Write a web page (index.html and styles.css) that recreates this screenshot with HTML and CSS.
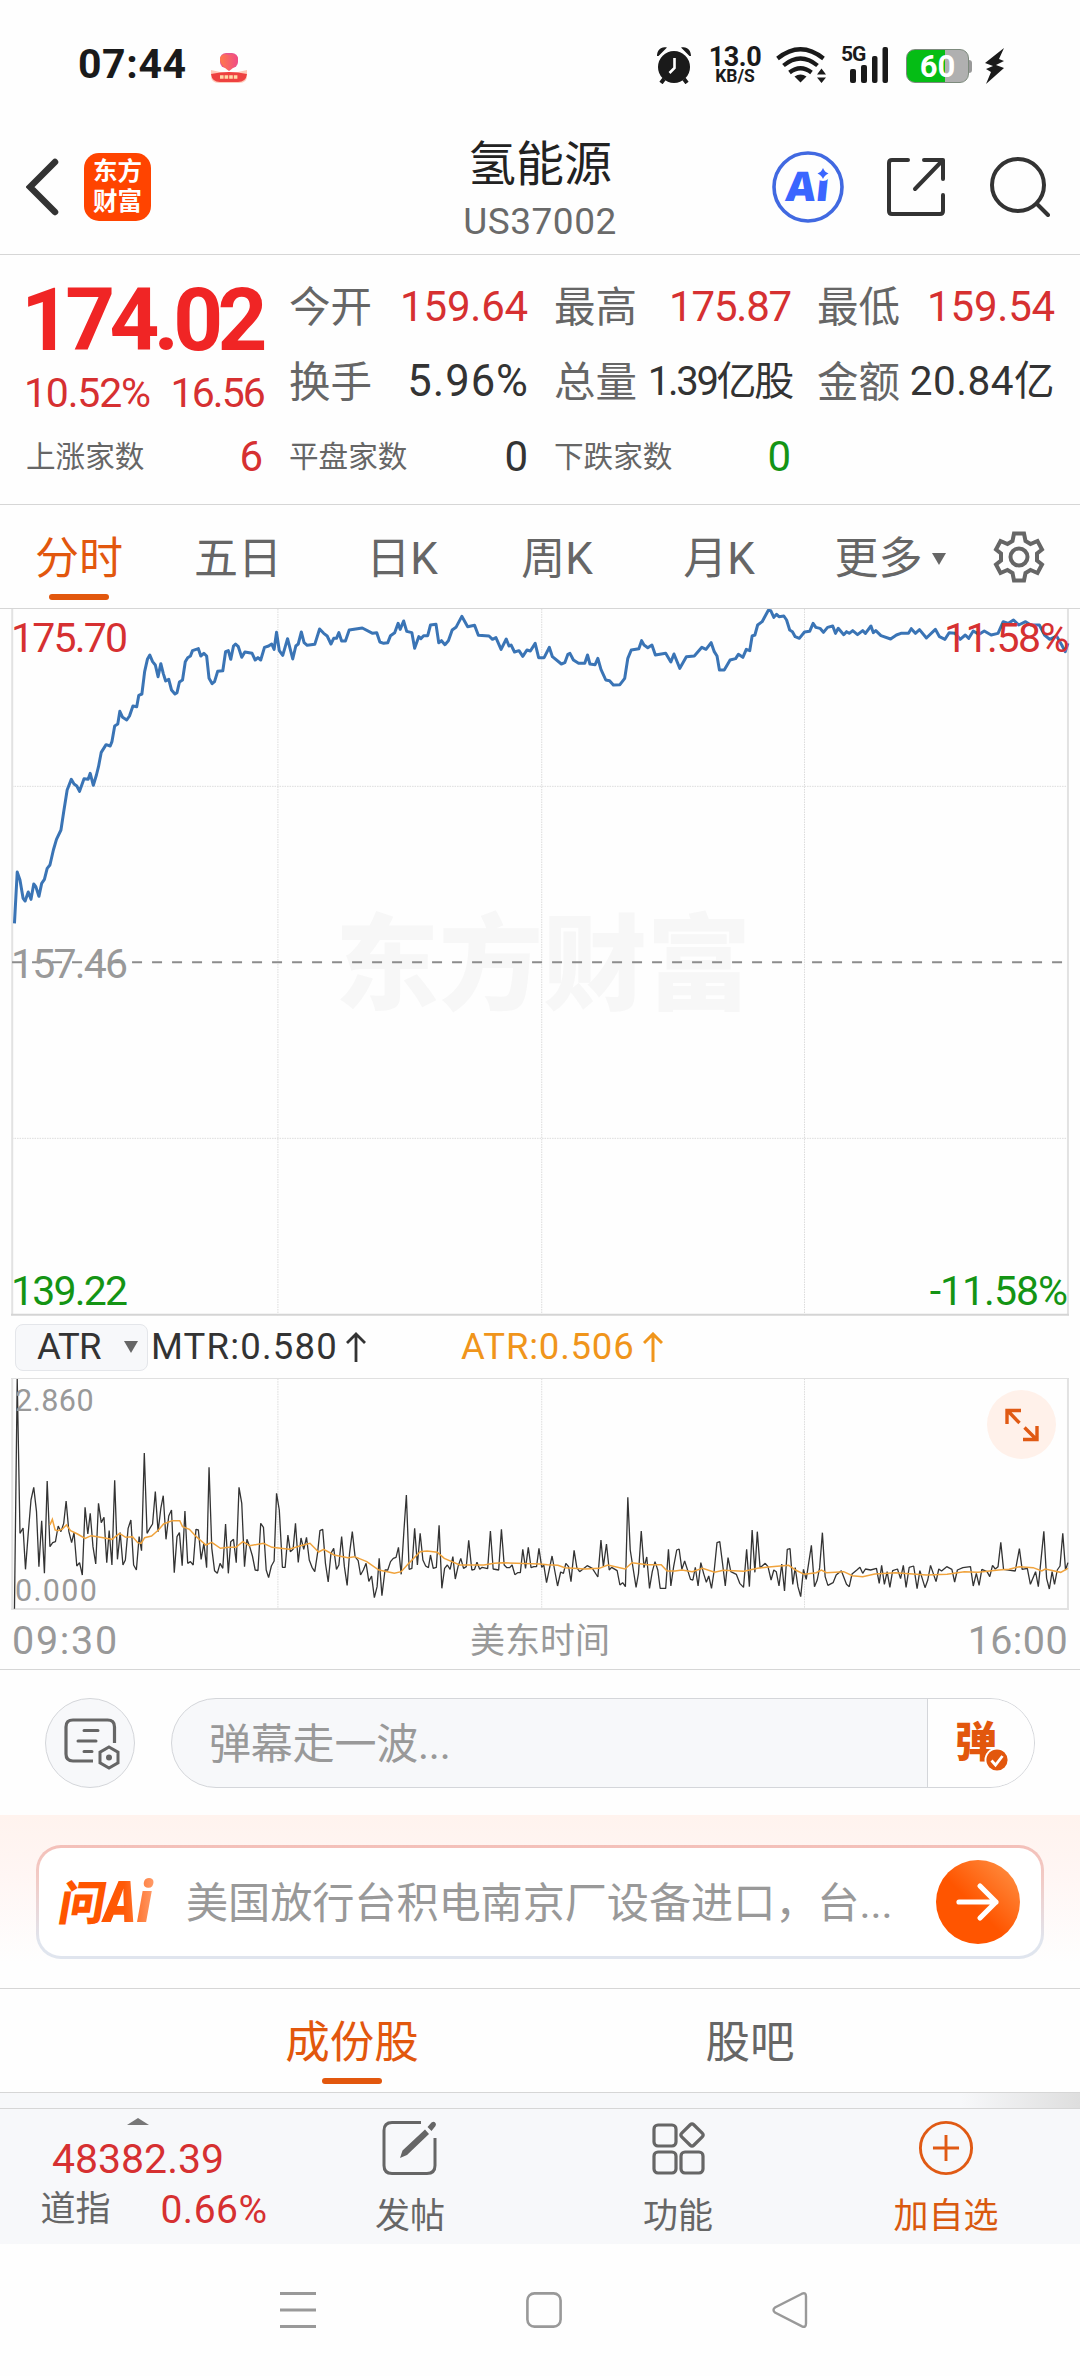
FILE: index.html
```html
<!DOCTYPE html>
<html lang="zh-CN">
<head>
<meta charset="utf-8">
<title>氢能源 US37002</title>
<link rel="stylesheet" href="styles.css">
</head>
<body>
<div class="screen">

<div class="status">
  <span class="clock">07:44</span>
  <svg class="st-app" width="36" height="32" viewBox="0 0 36 32">
    <defs><linearGradient id="peach" x1="0" x2="1"><stop offset="0" stop-color="#ff7a4a"/><stop offset="1" stop-color="#f04a86"/></linearGradient></defs>
    <rect x="9" y="1" width="18" height="15" rx="6" fill="#e8558f"/>
    <path d="M18 19C12 15 9 11 9 7c0-4 5-6 9-4 4-2 9 0 9 4 0 4-3 8-9 12z" fill="url(#peach)"/>
    <path d="M0 18q18 5 36 0v6q0 7-8 7H8q-8 0-8-7z" fill="#ffc9b8"/>
    <path d="M0 22q18-4 36 0-1 8-9 8H9q-8 0-9-8z" fill="#ee4140"/>
    <path d="M9 25h18" stroke="#ffd9a8" stroke-width="3.4" stroke-dasharray="3.6 1"/>
  </svg>
  <svg class="st-alarm" width="36" height="38" viewBox="0 0 36 38" fill="#1a1a1a">
    <circle cx="18" cy="21" r="16"/>
    <path d="M1 10C1 4 5 0 11 1.500L2.500 10zM35 10C35 4 31 0 25 1.500L33.500 10z"/>
    <path d="M8 33l-3 4M28 33l3 4" stroke="#1a1a1a" stroke-width="4"/>
    <path d="M18.500 12v10l-5 5" fill="none" stroke="#fff" stroke-width="2.600"/>
  </svg>
  <span class="rate"><b class="rate-n">13.0</b><b class="rate-u">KB/S</b></span>
  <svg class="st-wifi" width="51" height="36" viewBox="0 0 51 36" fill="none" stroke="#1a1a1a" stroke-width="4.200">
    <path d="M1.500 11.500Q24.500-7 47.500 11.500M7.500 18.500Q24.500 4.500 41.500 18.500M13.500 25.500q11-8.500 22 0"/>
    <path d="M18.500 29.500q6-4 12 0l-6 6z" fill="#1a1a1a" stroke="none"/>
    <path d="M45.500 21.500l4.500 6h-9zM45.500 36l4.500-5.500h-9z" fill="#1a1a1a" stroke="none"/>
  </svg>
  <span class="sig"><b class="sig-g">5G</b>
    <svg width="39" height="36" viewBox="0 0 39 36" fill="#1a1a1a"><rect y="22" width="6" height="14" rx="2"/><rect x="11" y="18" width="6" height="18" rx="2"/><rect x="22" y="9" width="5.500" height="27" rx="2"/><rect x="32.500" width="5.500" height="36" rx="2"/></svg>
  </span>
  <span class="batt"><b>60</b></span>
  <svg class="st-bolt" width="21" height="36" viewBox="0 0 21 36" fill="#1a1a1a"><path d="M20 0L1 15l8 3-7 3 5 3-5 12L20 20l-8-3 8-4-5-2z"/></svg>
</div>

<header class="head">
  <div class="head-l">
    <svg width="34" height="58" viewBox="0 0 34 58" fill="none" stroke="#333" stroke-width="6.500" stroke-linecap="round"><path d="M29 4L4 29l25 25"/></svg>
    <div class="brand"><span>东方</span><span>财富</span></div>
  </div>
  <div class="head-c"><h1>氢能源</h1><p>US37002</p></div>
  <div class="head-r">
    <svg class="ai-ico" width="72" height="72" viewBox="0 0 72 72">
      <circle cx="36" cy="36" r="34" fill="none" stroke="#4169e1" stroke-width="3.600"/>
      <text x="18 48" y="50.500" class="ai-t" transform="skewX(-6)">Ai</text>
      <circle cx="51" cy="22.500" r="7.500" fill="#fefefe"/>
      <path d="M51 17q1.500 4 5.500 5.500-4 1.500-5.500 5.500-1.500-4-5.500-5.500 4-1.500 5.500-5.500z" fill="#3a66ff"/>
    </svg>
    <svg class="share-ico" width="58" height="58" viewBox="0 0 58 58" fill="none" stroke="#333" stroke-width="4" stroke-linecap="round" stroke-linejoin="round"><path d="M21 2H5Q2 2 2 5v48q0 3 3 3h48q3 0 3-3V37M37 2h19v19M55 3L28 31"/></svg>
    <svg class="find-ico" width="60" height="60" viewBox="0 0 60 60" fill="none" stroke="#333" stroke-width="4" stroke-linecap="round"><circle cx="28" cy="28" r="26"/><path d="M47 47l11 11"/></svg>
  </div>
</header>

<section class="quote">
  <div class="big"><strong>174.02</strong><div class="chg"><span>10.52%</span><span class="amt">16.56</span></div></div>
  <div class="cell"><label>今开</label><span class="red n1">159.64</span></div>
  <div class="cell"><label>最高</label><span class="red n1 tight">175.87</span></div>
  <div class="cell"><label>最低</label><span class="red n1">159.54</span></div>
  <div class="cell"><label>换手</label><span class="n3">5.96%</span></div>
  <div class="cell"><label>总量</label><span class="n2">1.39亿股</span></div>
  <div class="cell"><label>金额</label><span class="n4">20.84亿</span></div>
  <div class="cell small"><label>上涨家数</label><span class="red">6</span></div>
  <div class="cell small"><label>平盘家数</label><span>0</span></div>
  <div class="cell small"><label>下跌家数</label><span class="green">0</span></div>
</section>

<nav class="period">
  <a class="on">分时</a><a>五日</a><a>日K</a><a>周K</a><a>月K</a><a class="more">更多<i></i></a>
  <a class="gear"><svg width="54" height="54" viewBox="0 0 54 54" fill="none" stroke="#666" stroke-width="4"><path d="M22 3.500h10l1.500 7.500 5 3 7-3 4.500 8.500-5 4v7l5 4-4.500 8.500-7-3-5 3-1.500 7.500H22l-1.500-7.500-5-3-7 3L4 34.500l5-4v-7l-5-4L8.500 11l7 3 5-3z"/><circle cx="27" cy="27" r="8.500"/></svg></a>
</nav>

<section class="chart price">
  <div class="mark">东方财富</div>
  <svg width="1080" height="707" viewBox="0 57 3136 2121" preserveAspectRatio="none">
    <g class="grid"><path d="M807 57V2176M1573 57V2176M2336 57V2176M35 589H3101M35 1645H3101"/></g>
    <path class="side" d="M35.500 57V2176M3101 57V2176"/><path class="base" d="M32 2174H3104"/>
    <path class="mid" d="M35 1117H3090"/>
    <polyline class="line" points="42,1000 50,846 58,870 67,925 73,933 82,906 90,928 98,882 104,890 113,919 121,880 129,868 137,835 145,825 155,780 164,748 177,720 185,665 195,600 207,568 215,582 223,588 231,604 244,566 256,568 262,550 271,586 280,555 286,530 294,487 308,464 320,468 325,455 333,408 342,402 348,364 356,382 368,390 376,378 386,348 397,350 403,316 412,312 420,245 428,208 435,195 443,215 451,225 459,260 467,221 474,250 481,273 490,268 498,300 508,312 514,308 521,276 530,270 538,215 545,203 553,198 559,182 576,176 583,198 592,190 600,198 607,265 616,281 623,275 632,244 647,242 655,185 663,182 670,208 678,168 684,162 692,170 702,202 711,186 732,190 741,210 749,203 757,210 768,172 780,168 789,162 796,178 803,127 811,182 821,196 835,146 850,207 859,168 866,162 875,126 883,158 892,166 914,163 928,117 940,130 950,138 961,162 969,145 977,145 984,128 992,153 1003,153 1014,120 1052,114 1082,130 1094,128 1103,156 1114,160 1126,158 1134,137 1146,128 1156,100 1162,118 1172,93 1181,124 1196,128 1204,175 1216,140 1222,146 1230,137 1242,137 1250,105 1266,103 1274,158 1282,152 1292,164 1302,152 1313,120 1324,112 1341,79 1358,110 1378,106 1389,136 1420,138 1430,148 1440,143 1455,178 1470,147 1478,168 1484,165 1494,186 1507,182 1518,199 1530,180 1540,183 1554,160 1564,203 1580,203 1595,172 1604,200 1630,222 1640,218 1649,193 1655,190 1665,210 1680,220 1698,220 1706,195 1713,222 1728,224 1736,205 1745,238 1759,270 1770,272 1781,285 1800,284 1814,265 1823,205 1833,180 1855,176 1863,152 1870,165 1881,173 1893,165 1903,195 1933,190 1948,216 1957,192 1974,235 1993,200 2016,198 2038,172 2050,178 2065,158 2074,185 2082,198 2089,240 2103,240 2120,210 2136,206 2144,193 2157,202 2167,178 2177,182 2184,138 2192,135 2200,105 2213,95 2231,61 2238,62 2247,82 2255,73 2262,80 2276,78 2284,90 2293,120 2301,125 2309,140 2321,145 2336,126 2351,124 2361,100 2369,112 2381,115 2391,127 2403,112 2418,108 2426,130 2434,115 2450,134 2458,125 2466,130 2476,122 2490,134 2505,122 2513,130 2529,108 2536,128 2543,122 2558,137 2586,147 2603,135 2616,130 2638,130 2646,116 2658,130 2670,119 2690,144 2716,118 2728,140 2744,148 2756,128 2773,130 2788,148 2803,135 2813,145 2826,123 2843,133 2858,123 2878,135 2898,130 2913,95 2928,100 2943,90 2958,105 2978,95 2993,105 3018,105 3033,135 3048,148 3068,138 3083,165 3093,185 3101,160"/>
  </svg>
  <span class="lab l-tl">175.70</span><span class="lab l-tr">11.58%</span>
  <span class="lab l-ml">157.46</span>
  <span class="lab l-bl">139.22</span><span class="lab l-br">-11.58%</span>
</section>

<div class="ind">
  <span class="sel">ATR<i></i></span>
  <span class="mtr">MTR:0.580</span>
  <svg width="20" height="30" viewBox="0 0 20 30" fill="none" stroke="#333" stroke-width="2.800"><path d="M10 30V2M1 11l9-9 9 9"/></svg>
  <span class="atr">ATR:0.506</span>
  <svg width="20" height="30" viewBox="0 0 20 30" fill="none" stroke="#f0951b" stroke-width="3"><path d="M10 30V2M1 11l9-9 9 9"/></svg>
</div>

<section class="chart vol">
  <svg width="1080" height="232" viewBox="0 324 3136 696" preserveAspectRatio="none">
    <g class="grid"><path d="M807 326V1016M1573 326V1016M2336 326V1016"/></g>
    <path class="side" d="M35.500 324V1018M3101 324V1018M32 1017H3104"/><path class="top" d="M32 325.500H3104"/>
    <polyline class="bars" points="42,1016 50,327 58,790 67,774 74,898 82,790 90,690 98,652 106,725 113,890 121,752 129,910 137,633 145,830 153,818 161,815 169,768 177,785 185,760 192,693 200,785 208,818 215,788 223,888 231,878 239,915 247,712 255,792 262,730 270,830 278,882 286,700 294,758 302,742 310,878 317,782 325,885 333,631 341,868 349,788 357,885 364,870 372,775 380,750 388,885 396,900 404,800 411,842 419,549 427,790 435,775 443,762 451,665 459,785 467,715 474,677 482,808 490,738 498,720 506,908 514,800 521,788 529,887 537,723 545,880 553,875 561,885 569,778 576,780 584,868 592,820 600,893 607,592 615,835 623,902 631,910 639,880 647,895 655,762 663,910 670,815 678,808 686,878 694,652 702,700 710,890 717,808 725,830 733,858 741,900 749,902 757,760 765,772 773,900 780,923 788,888 796,873 803,670 811,720 820,892 828,892 836,795 843,845 851,838 858,760 866,877 874,804 882,838 890,802 898,870 906,892 914,905 922,850 929,782 937,778 945,880 953,936 961,850 969,835 977,898 984,885 992,800 1000,890 1008,946 1015,850 1023,785 1031,860 1040,872 1047,915 1055,900 1063,880 1071,934 1079,918 1087,983 1095,950 1101,865 1109,977 1118,900 1126,900 1134,875 1142,865 1150,862 1157,832 1165,913 1173,780 1180,675 1188,898 1196,895 1204,775 1212,885 1220,790 1228,870 1236,888 1244,893 1250,855 1258,895 1267,892 1275,766 1283,955 1291,895 1299,885 1307,898 1315,860 1322,927 1330,890 1338,865 1346,895 1354,890 1361,811 1370,900 1378,898 1385,877 1393,898 1400,892 1416,896 1424,783 1432,897 1448,900 1456,778 1464,885 1472,893 1480,893 1487,885 1495,914 1503,908 1511,908 1518,838 1526,895 1534,832 1542,893 1550,890 1558,890 1565,835 1573,892 1579,885 1587,938 1603,858 1619,948 1628,906 1636,910 1643,880 1651,890 1658,935 1667,841 1675,893 1683,905 1705,887 1720,895 1736,921 1745,810 1752,890 1761,822 1769,900 1776,892 1792,902 1800,945 1808,938 1816,950 1823,682 1830,840 1847,952 1854,910 1862,783 1870,893 1878,861 1886,955 1894,905 1902,875 1910,900 1917,955 1933,955 1941,838 1948,948 1956,890 1965,840 1972,837 1980,898 1988,873 1998,905 2005,928 2012,930 2019,892 2027,948 2035,878 2043,910 2051,937 2058,918 2066,955 2074,900 2082,818 2090,815 2098,880 2106,948 2114,863 2122,905 2138,913 2148,940 2159,952 2168,838 2176,950 2184,780 2192,907 2199,785 2207,893 2222,880 2230,890 2239,930 2247,900 2254,905 2262,948 2270,882 2278,963 2286,838 2294,836 2302,943 2309,893 2317,950 2325,980 2333,898 2341,928 2356,826 2365,950 2373,930 2380,893 2388,788 2396,920 2404,946 2419,938 2428,915 2443,902 2458,943 2466,950 2474,912 2488,900 2497,892 2505,910 2513,897 2528,900 2545,895 2553,940 2560,886 2568,943 2576,905 2584,952 2592,902 2606,897 2615,926 2623,886 2631,952 2640,892 2653,888 2663,956 2671,902 2686,953 2694,930 2702,886 2718,935 2726,897 2734,903 2749,890 2764,898 2772,936 2780,900 2796,893 2818,890 2826,948 2835,910 2843,946 2851,898 2866,905 2874,920 2882,886 2890,897 2898,890 2906,817 2914,898 2948,903 2960,836 2968,898 2983,895 2992,943 3007,905 3015,950 3031,784 3039,925 3047,957 3055,905 3062,943 3070,900 3078,888 3086,790 3094,900 3101,878"/>
    <polyline class="avg" points="145,765 152,748 160,780 168,782 180,778 193,765 205,782 225,792 247,805 265,797 300,803 325,808 347,790 365,802 385,800 400,818 410,820 420,803 440,798 460,780 475,762 500,752 522,752 530,770 550,778 570,800 598,825 615,817 640,835 665,832 685,832 705,815 725,827 765,820 790,832 840,838 870,828 900,820 925,846 940,838 970,855 1010,863 1030,860 1065,875 1100,900 1125,905 1145,910 1165,905 1185,882 1220,845 1240,843 1270,847 1290,865 1335,885 1405,885 1435,880 1460,878 1500,880 1568,882 1590,884 1620,886 1640,893 1700,897 1740,895 1765,885 1815,897 1835,878 1880,884 1920,884 1937,903 1960,903 1980,900 2010,905 2040,895 2075,907 2100,901 2130,902 2160,904 2200,895 2240,890 2290,886 2310,900 2335,913 2370,908 2385,900 2400,908 2450,905 2475,917 2505,920 2540,912 2600,908 2690,915 2750,913 2800,905 2840,907 2900,900 2930,898 2960,890 3000,893 3025,903 3035,897 3080,907 3101,895"/>
  </svg>
  <span class="lab v-t">2.860</span><span class="lab v-b">0.000</span>
  <span class="expand"><svg width="34" height="36" viewBox="0 0 34 36" fill="none" stroke="#e05a14" stroke-width="3.400"><path d="M2 17V3.500h14M3 4l11.500 12M32 19v13.500H18M31 32L19.500 20.500"/></svg></span>
</section>

<div class="axis"><span class="start">09:30</span><span class="zone">美东时间</span><span class="end">16:00</span></div>

<div class="danmu">
  <span class="round"><svg width="56" height="52" viewBox="0 0 56 52" fill="none" stroke="#666" stroke-width="3"><path d="M50.500 25V9q0-7-7-7H9Q2 2 2 9v27q0 7 7 7h20" stroke-width="3.200"/><path d="M20 12.500h14M14 23h18M20 33.500h8" stroke-linecap="round"/><path d="M45 29l9 5.200v10.600L45 50l-9-5.200V34.200z"/><circle cx="45" cy="39.500" r="3" fill="#666" stroke="none"/></svg></span>
  <div class="pill"><span class="hint">弹幕走一波...</span><span class="dan">弹<svg width="26" height="26" viewBox="0 0 26 26"><circle cx="13" cy="13" r="12.500" fill="#fff"/><circle cx="13" cy="13" r="10.600" fill="#e2570d"/><path d="M7.500 13.500l4 4.500 7-9" fill="none" stroke="#fff" stroke-width="2.800"/></svg></span></div>
</div>

<section class="ask">
  <div class="card">
    <svg class="wen" width="104" height="80" viewBox="-4 -17 104 80">
      <defs><linearGradient id="wg" gradientUnits="userSpaceOnUse" x1="45" x2="98" y1="0" y2="0"><stop offset="0" stop-color="#ff5500"/><stop offset=".4" stop-color="#ff5a08"/><stop offset="1" stop-color="#ffa070"/></linearGradient></defs>
      <text x="0" y="41" class="wen-t" fill="url(#wg)" textLength="46" lengthAdjust="spacingAndGlyphs" transform="skewX(-10) translate(6 0)">问</text>
      <text x="46" y="43" class="wen-t wen-a" fill="url(#wg)" textLength="48" lengthAdjust="spacingAndGlyphs">Ai</text>
    </svg>
    <span class="news">美国放行台积电南京厂设备进口，台...</span>
    <span class="go"><svg width="44" height="40" viewBox="0 0 44 40" fill="none" stroke="#fff" stroke-width="5.200" stroke-linecap="round" stroke-linejoin="round"><path d="M3 20h37M24 4l16 16-16 16"/></svg></span>
  </div>
</section>

<nav class="sub"><a class="on">成份股</a><a>股吧</a></nav>
<div class="gap"></div>

<footer class="bar">
  <div class="idx"><i></i><b>48382.39</b><div><span class="nm">道指</span><span class="pc">0.66%</span></div></div>
  <a class="b1"><svg width="56" height="56" viewBox="0 0 56 56" fill="none" stroke="#666" stroke-width="3"><path d="M39 2.500H10q-8 0-8 8v35q0 8 8 8h35q8 0 8-8V18"/><path d="M43 9.500l4 4.500L25 35l-7 3 2.500-7.500zM45.500 7l4-4.500q3-2 4.500 1.500l-.5 2-4 5z" fill="#666" stroke="none"/></svg>发帖</a>
  <a class="b2"><svg width="56" height="56" viewBox="0 0 56 56" fill="none" stroke="#666" stroke-width="3.200"><rect x="4" y="5" width="22" height="21" rx="4"/><rect x="4" y="32" width="22" height="21" rx="4"/><rect x="31" y="32" width="22" height="21" rx="4"/><rect x="33.500" y="6.500" width="17" height="17" rx="2.500" transform="rotate(45 42 15)"/></svg>功能</a>
  <a class="b3"><svg width="58" height="58" viewBox="0 0 58 58" fill="none" stroke="#e05a14" stroke-width="3"><circle cx="29" cy="29" r="26.500"/><path d="M29 15.500v27M15.500 29h27"/></svg>加自选</a>
</footer>

<div class="keys">
  <svg width="36" height="36" viewBox="0 0 36 36" stroke="#999" stroke-width="3"><path d="M0 1.500h36M0 18h36M0 34.500h36"/></svg>
  <svg width="36" height="36" viewBox="0 0 36 36" fill="none" stroke="#999" stroke-width="2.600"><rect x="1.400" y="1.400" width="33.200" height="33.200" rx="7"/></svg>
  <svg width="36" height="36" viewBox="0 0 36 36" fill="none" stroke="#999" stroke-width="2.400"><path d="M30 1.700L3 15.500Q0 18 3 20.500L30 34.300Q34 36 34 31.500v-27Q34 0 30 1.700z"/></svg>
</div>

</div>
</body>
</html>
```
FILE: styles.css
```css
* { box-sizing: border-box; }
body { margin: 0; background: #fefefe; }
.screen { width: 1080px; height: 2376px; overflow: hidden; font-family: Roboto, "Noto Sans CJK SC", sans-serif; color: #333; }
svg { display: block; flex: none; }
h1, p { margin: 0; font-weight: 400; }
i { font-style: normal; }
.red { color: #d63031; }
.green { color: #149414; }

.status { display: flex; align-items: center; height: 128px; padding-left: 78px; color: #1a1a1a; }
.clock { width: 133px; font-size: 41px; font-weight: 700; line-height: 50px; letter-spacing: 0.600px; }
.st-app { margin-top: 7px; }
.st-alarm { margin-left: 409px; margin-top: 1px; }
.rate { display: flex; flex-direction: column; align-items: center; width: 52px; margin: 3px 0 0 17px; }
.rate-n { font-size: 27px; line-height: 20px; letter-spacing: -0.500px; }
.rate-u { font-size: 17.500px; line-height: 18px; }
.st-wifi { margin-left: 15px; margin-top: 2px; }
.sig { display: flex; width: 48px; margin: 2px 0 0 14px; }
.sig-g { width: 9px; font-size: 21px; line-height: 15px; letter-spacing: -1px; white-space: nowrap; }
.batt { position: relative; width: 63px; height: 34px; margin: 4px 0 0 17px; border: 1px solid #7d8a7d; border-radius: 9px; background: linear-gradient(90deg, #05bd15 63%, #b0b0b0 63%); color: #fff; text-align: center; }
.batt::after { content: ""; position: absolute; left: 62px; top: 10px; width: 3px; height: 13px; border-radius: 0 3px 3px 0; background: #999; }
.batt b { font-size: 31px; line-height: 34px; }
.st-bolt { margin-left: 15px; margin-top: 4px; }

.head { display: grid; grid-template-columns: 1fr auto 1fr; height: 127px; border-bottom: 1px solid #d6d6d6; }
.head-l { display: flex; align-items: center; height: 118px; padding-left: 26px; gap: 24px; }
.brand { display: flex; flex-direction: column; align-items: center; width: 67px; height: 68px; padding-top: 4px; border-radius: 15px; background: #ff4400; color: #fff; font-size: 24.500px; font-weight: 700; line-height: 29.500px; }
.head-c { text-align: center; }
.head-c h1 { font-size: 48px; line-height: 74px; height: 70px; color: #222; }
.head-c p { font-size: 37px; line-height: 48px; letter-spacing: 0.500px; color: #6a6a6a; }
.head-r { display: flex; align-items: center; justify-content: flex-end; height: 118px; padding-right: 30px; }
.share-ico { margin-left: 43px; }
.find-ico { margin-left: 45px; }
.ai-t { font-family: "Open Sans", sans-serif; font-size: 41px; font-weight: 800; fill: #3a66ff; }

.quote { display: grid; grid-template-columns: 237px 239px 237px 238px; grid-template-rows: 75px 75px 75px; column-gap: 26px; height: 250px; padding: 14px 0 0 26px; border-bottom: 1px solid #d6d6d6; }
.big { grid-row: 1 / 3; color: #d63031; }
.big strong { display: block; height: 99px; margin-left: -5px; font-size: 87px; line-height: 102px; letter-spacing: -5.700px; color: #f02525; }
.chg { display: flex; justify-content: space-between; margin-left: -2px; font-size: 41px; line-height: 50px; letter-spacing: -1.200px; }
.amt { letter-spacing: -1.900px; margin-right: -1px; }
.cell { display: flex; justify-content: space-between; align-items: center; font-size: 42px; line-height: 75px; white-space: nowrap; }
.cell label { color: #666; font-size: 41.500px; padding-top: 2px; }
.small label { font-size: 29.600px; }
.n1 { letter-spacing: -0.200px; }
.tight { letter-spacing: -1.200px; }
.n2 { font-size: 40px; letter-spacing: -2.300px; margin-right: -1px; }
.n3 { font-size: 43.500px; letter-spacing: 1px; margin-right: -1px; }
.n4 { font-size: 40.500px; letter-spacing: 0.500px; }

.period { display: grid; grid-template-columns: 158px 160px 168px 142px 182px 160px 97px; height: 104px; border-bottom: 1px solid #d6d6d6; font-size: 44px; line-height: 108px; color: #666; text-align: center; }
.on { position: relative; color: #e2570d; }
.on::after { content: ""; position: absolute; left: 50%; bottom: 13px; width: 60px; height: 6px; margin-left: -30px; border-radius: 3px; background: #e2570d; }
.more { display: flex; justify-content: center; align-items: center; gap: 9px; }
.more i, .sel i { border: 7.500px solid transparent; border-top: 12px solid #666; border-bottom: 0; }
.gear { display: flex; align-items: center; justify-content: center; height: 103px; }

.chart { position: relative; }
.chart svg path, .chart svg polyline { fill: none; vector-effect: non-scaling-stroke; }
.price { height: 707px; }
.price svg { position: relative; }
.grid path { stroke: #dcdcdc; stroke-width: 1px; stroke-dasharray: 1.500 1; }
.side { stroke: #e2e2e2; stroke-width: 2px; }
.base { stroke: #d4d4d4; stroke-width: 2px; }
.top { stroke: #e0e0e0; stroke-width: 1px; }
.mid { stroke: #8c8c8c; stroke-width: 2px; stroke-dasharray: 10 10; }
.line { stroke: #3a74b5; stroke-width: 3px; stroke-linejoin: round; }
.bars { stroke: #333; stroke-width: 1.300px; stroke-linejoin: bevel; }
.avg { stroke: #f0a33c; stroke-width: 1.500px; }
.mark { position: absolute; left: 0; top: 288px; width: 1080px; padding-left: 6px; text-align: center; font-size: 104px; font-weight: 900; line-height: 140px; color: #f7f7f7; }
.lab { position: absolute; font-size: 41px; line-height: 50px; letter-spacing: -1.800px; white-space: nowrap; }
.l-tl { left: 11px; top: 4px; color: #d63031; }
.l-tr { right: 12px; top: 4px; color: #d63031; letter-spacing: -1.500px; }
.l-ml { left: 11px; top: 330px; color: #999; }
.l-bl { left: 11px; top: 657px; color: #149414; }
.l-br { right: 13px; top: 657px; color: #149414; letter-spacing: -1px; }

.ind { display: flex; align-items: center; height: 62px; padding-left: 15px; font-size: 36.500px; line-height: 46px; }
.sel { display: flex; align-items: center; justify-content: space-between; width: 133px; height: 47px; padding: 0 9px 0 21px; border: 1px solid #e4e6ea; border-radius: 8px; background: #f7f8fa; letter-spacing: -0.600px; }
.mtr { width: 198px; padding-left: 3px; letter-spacing: 1.200px; }
.atr { width: 182px; margin-left: 95px; color: #f0951b; letter-spacing: 0.800px; }

.vol { height: 232px; }
.v-t { left: 15px; top: -2px; font-size: 30.500px; letter-spacing: 0.500px; color: #999; }
.v-b { left: 15px; top: 188px; font-size: 30.500px; letter-spacing: 1.300px; color: #999; }
.expand { position: absolute; left: 987px; top: 12px; display: flex; align-items: center; justify-content: center; width: 69px; height: 69px; border-radius: 50%; background: #fff1ea; }

.axis { display: grid; grid-template-columns: 1fr auto 1fr; height: 60px; padding: 0 13px; border-bottom: 1px solid #d6d6d6; font-size: 39.500px; line-height: 61px; color: #999; }
.start { margin-left: -1px; letter-spacing: 1.700px; }
.zone { font-size: 35px; line-height: 64px; }
.end { text-align: right; letter-spacing: 0.400px; margin-right: -1px; }

.danmu { display: flex; align-items: center; height: 145px; padding-left: 45px; }
.round { display: flex; align-items: center; justify-content: center; width: 90px; height: 90px; padding: 2px 0 0 4px; border: 1px solid #d4d6da; border-radius: 50%; background: #f7f8fa; }
.pill { display: flex; width: 864px; height: 90px; margin-left: 36px; border: 1px solid #d4d6da; border-radius: 45px; background: #f7f8fa; overflow: hidden; line-height: 92px; }
.hint { flex: 1; padding-left: 37px; font-size: 42px; color: #999; letter-spacing: -0.200px; }
.dan { position: relative; width: 107px; padding-left: 27px; border-left: 1px solid #d4d6da; background: #fefefe; color: #e2570d; font-size: 42px; font-weight: 900; line-height: 88px; }
.dan svg { position: absolute; left: 56px; top: 48px; }

.ask { height: 174px; padding: 30px 36px 0; border-bottom: 1px solid #d6d6d6; background: linear-gradient(#fff3ee, #fff6f4 35%, #fefefe 85%); }
.card { display: flex; align-items: center; width: 1008px; height: 114px; padding-left: 15px; border: 3px solid transparent; border-radius: 25px; background: linear-gradient(#fff, #fff) padding-box, linear-gradient(#f4c0b9, #f2cbc6 30%, #e0e5ee 85%) border-box; }
.wen-t { font-family: "Noto Sans CJK SC", sans-serif; font-size: 47px; font-weight: 900; }
.wen-a { font-family: "Open Sans", sans-serif; font-size: 56px; font-weight: 800; font-style: italic; }
.news { width: 778px; padding: 4px 0 0 28px; font-size: 42.200px; line-height: 60px; color: #999; white-space: nowrap; letter-spacing: -0.100px; }
.go { display: flex; align-items: center; justify-content: center; width: 84px; height: 84px; border-radius: 50%; background: linear-gradient(45deg, #ff5500 45%, #ff964a); }

.sub { display: grid; grid-template-columns: 352px 1fr; height: 104px; border-bottom: 1px solid #d6d6d6; font-size: 44.500px; line-height: 108px; color: #666; }
.sub a { width: 200px; margin-left: 252px; text-align: center; }
.sub a + a { margin-left: 298px; }
.gap { height: 16px; border-bottom: 1px solid #d6d6d6; background: linear-gradient(90deg, #f7f8fa 89%, #dedede); }

.bar { display: grid; grid-template-columns: 276px 268px 268px 268px; height: 135px; background: #f7f8fa; color: #666; text-align: center; }
.idx { display: flex; flex-direction: column; align-items: center; padding-top: 9px; color: #d63031; }
.idx i { border: 11px solid transparent; border-bottom: 7px solid #777; border-top: 0; }
.idx b { font-size: 41px; font-weight: 400; line-height: 50px; margin-top: 9px; }
.idx div { display: flex; align-items: center; gap: 50px; line-height: 50px; padding-left: 32px; }
.nm { font-size: 35px; color: #666; padding-top: 1px; }
.pc { font-size: 39px; letter-spacing: 0.500px; }
.bar a { display: flex; flex-direction: column; align-items: center; padding-top: 11px; font-size: 35px; line-height: 52px; }
.bar svg { margin-bottom: 15px; height: 56px; }
.bar .b3 { color: #d9590f; }

.keys { display: flex; height: 132px; padding: 48px 0 0 280px; gap: 210px; }
```
